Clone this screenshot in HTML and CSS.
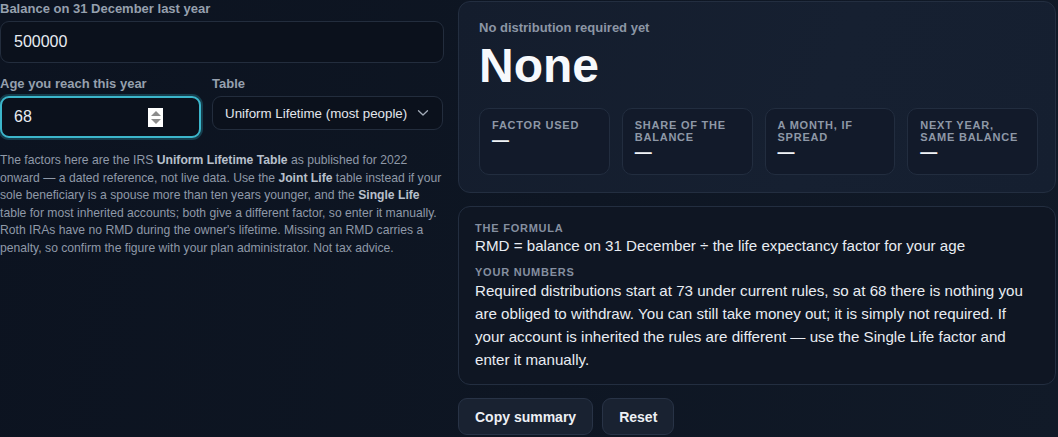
FILE: index.html
```html
<!DOCTYPE html>
<html lang="en">
<head>
<meta charset="utf-8">
<title>RMD calculator</title>
<link rel="stylesheet" href="styles.css">
</head>
<body>
<main class="layout">
  <section class="inputs">
    <label class="field-label">Balance on 31 December last year</label>
    <div class="control">
      <input class="control-input" type="text" value="500000">
    </div>
    <div class="row">
      <div class="col">
        <label class="field-label">Age you reach this year</label>
        <div class="control control-focus">
          <input class="control-input" type="text" value="68">
          <span class="spinner"><span class="spin-up"></span><span class="spin-down"></span></span>
        </div>
      </div>
      <div class="col">
        <label class="field-label">Table</label>
        <div class="select">
          <span class="select-text">Uniform Lifetime (most people)</span>
          <svg class="chevron" width="12" height="8" viewBox="0 0 12 8"><path d="M1.5 1.8l4.5 4.2 4.5-4.2" fill="none" stroke="#a3acb9" stroke-width="1.3" stroke-linecap="round" stroke-linejoin="round"/></svg>
        </div>
      </div>
    </div>
    <p class="note">The factors here are the IRS <b>Uniform Lifetime Table</b> as published for 2022 onward — a dated reference, not live data. Use the <b>Joint Life</b> table instead if your sole beneficiary is a spouse more than ten years younger, and the <b>Single Life</b> table for most inherited accounts; both give a different factor, so enter it manually. Roth IRAs have no RMD during the owner's lifetime. Missing an RMD carries a penalty, so confirm the figure with your plan administrator. Not tax advice.</p>
  </section>
  <section class="results">
    <div class="card result-card">
      <div class="result-kicker">No distribution required yet</div>
      <div class="result-value">None</div>
      <div class="stats">
        <div class="stat"><div class="stat-label">Factor used</div><div class="stat-value">—</div></div>
        <div class="stat"><div class="stat-label">Share of the balance</div><div class="stat-value">—</div></div>
        <div class="stat"><div class="stat-label">A month, if spread</div><div class="stat-value">—</div></div>
        <div class="stat"><div class="stat-label">Next year, same balance</div><div class="stat-value">—</div></div>
      </div>
    </div>
    <div class="card explain-card">
      <div class="explain-label">The formula</div>
      <div class="explain-formula">RMD = balance on 31 December ÷ the life expectancy factor for your age</div>
      <div class="explain-label explain-gap">Your numbers</div>
      <p class="explain-text">Required distributions start at 73 under current rules, so at 68 there is nothing you are obliged to withdraw. You can still take money out; it is simply not required. If your account is inherited the rules are different — use the Single Life factor and enter it manually.</p>
    </div>
    <div class="actions">
      <button class="btn">Copy summary</button>
      <button class="btn">Reset</button>
    </div>
  </section>
</main>
</body>
</html>
```

FILE: styles.css
```css
* { box-sizing: border-box; }
html, body { height: 100%; }
body {
  margin: 0;
  font-family: "Liberation Sans", Arial, sans-serif;
  color: #e6eaf0;
  background: linear-gradient(100deg, #0c1320 0%, #0e1623 55%, #111a28 100%);
  overflow: hidden;
}
.layout {
  display: grid;
  grid-template-columns: 444px 598px;
  column-gap: 14px;
  padding: 1px 2px 0 0;
}
.field-label {
  display: block;
  font-size: 13px;
  font-weight: 700;
  line-height: 16px;
  color: #96a0ae;
  margin-bottom: 4px;
}
.control {
  display: flex;
  align-items: center;
  height: 42px;
  background: #0b111c;
  border: 1px solid #232d3d;
  border-radius: 9px;
  padding: 0 13px;
}
.control-focus {
  border: 2px solid #3cb6cb;
  box-shadow: 0 0 0 2px rgba(40, 140, 160, 0.35);
  padding: 0 36px 0 12px;
}
.control-input {
  flex: 1;
  min-width: 0;
  background: transparent;
  border: 0;
  outline: none;
  font-family: inherit;
  font-size: 16px;
  color: #e8ecf2;
  padding: 0;
}
.spinner {
  display: flex;
  flex-direction: column;
  justify-content: center;
  gap: 3px;
  width: 15px;
  height: 19px;
  background: #ffffff;
  align-items: center;
}
.spin-up, .spin-down {
  width: 0;
  height: 0;
  border-left: 5px solid transparent;
  border-right: 5px solid transparent;
}
.spin-up { border-bottom: 5px solid #8c8c8c; }
.spin-down { border-top: 5px solid #8c8c8c; }
.row {
  display: grid;
  grid-template-columns: 201px 231px;
  column-gap: 11px;
  margin-top: 13px;
}
.select {
  display: flex;
  align-items: center;
  justify-content: space-between;
  height: 34px;
  background: #0b111c;
  border: 1px solid #232d3d;
  border-radius: 9px;
  padding: 0 13px 0 12px;
}
.select-text { font-size: 13.33px; color: #e2e6ec; }
.chevron { display: block; }
.note {
  margin: 14px 0 0;
  font-size: 12.16px;
  line-height: 17.6px;
  color: #8f99a8;
}
.note b { color: #b8c0cc; font-weight: 700; }
.results { display: flex; flex-direction: column; }
.card {
  border: 1px solid #232e40;
  border-radius: 12px;
}
.result-card {
  height: 192px;
  padding: 18px 17px 0 20px;
  background: linear-gradient(110deg, #141d2d 0%, #162031 60%, #151f30 100%);
}
.result-kicker {
  font-size: 13px;
  font-weight: 700;
  line-height: 15px;
  color: #8c96a5;
}
.result-value {
  margin-top: 7px;
  font-size: 48px;
  font-weight: 700;
  line-height: 48px;
  color: #f7f9fc;
}
.stats {
  display: grid;
  grid-template-columns: repeat(4, 1fr);
  column-gap: 12px;
  margin-top: 18px;
  height: 67px;
}
.stat {
  background: #121a2a;
  border: 1px solid #222d3f;
  border-radius: 10px;
  padding: 10px 12px 0;
}
.stat-label {
  font-size: 11px;
  font-weight: 700;
  line-height: 12px;
  letter-spacing: 0.07em;
  text-transform: uppercase;
  color: #8e98a7;
}
.stat-value {
  font-size: 17px;
  font-weight: 700;
  line-height: 20px;
  color: #f0f3f7;
  margin-top: 0;
}
.explain-card {
  margin-top: 13px;
  height: 179px;
  padding: 15px 17px 0 16px;
  background: #0f1623;
}
.explain-label {
  font-size: 11px;
  font-weight: 700;
  line-height: 13px;
  letter-spacing: 0.07em;
  text-transform: uppercase;
  color: #858fa0;
}
.explain-gap { margin-top: 10px; }
.explain-formula {
  margin-top: 1px;
  font-size: 15.15px;
  line-height: 20px;
  color: #e8ecf2;
}
.explain-text {
  margin: 0;
  font-size: 15.15px;
  line-height: 23px;
  color: #e8ecf2;
}
.actions {
  display: flex;
  gap: 9px;
  margin-top: 13px;
}
.btn {
  height: 37px;
  padding: 0 16px;
  font-family: inherit;
  font-size: 14px;
  font-weight: 700;
  color: #edf0f5;
  background: #192231;
  border: 1px solid #283346;
  border-radius: 9px;
}
```
